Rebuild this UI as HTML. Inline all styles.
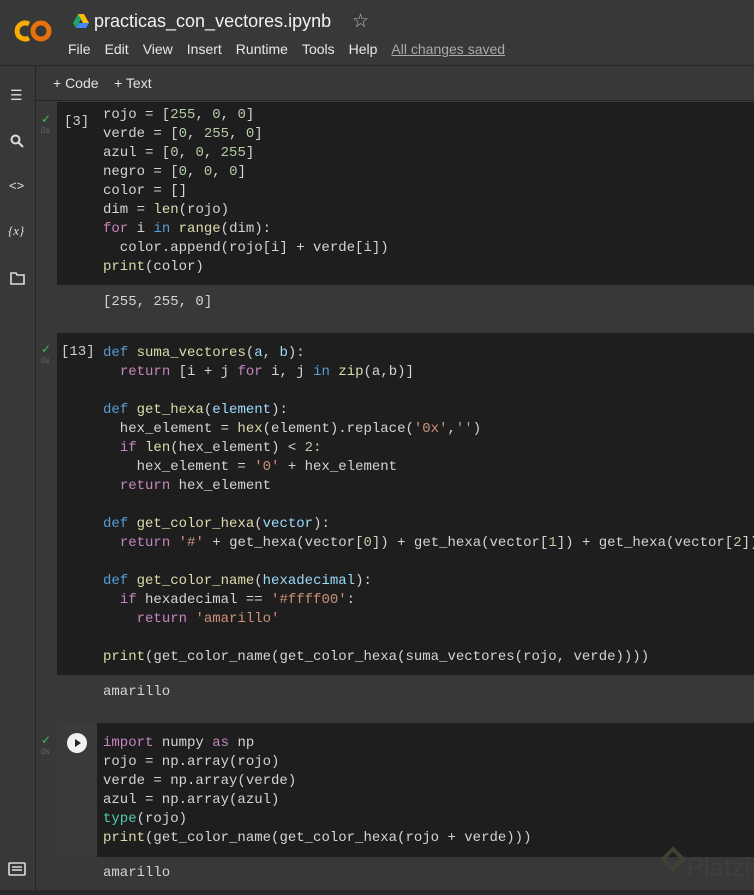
<!DOCTYPE html>
<html><head><meta charset="utf-8"><style>
*{margin:0;padding:0;box-sizing:border-box}
body{width:754px;height:895px;background:#383838;overflow:hidden;position:relative;font-family:"Liberation Sans",sans-serif;color:#e3e3e3}
.hdr{position:absolute;left:0;top:0;width:754px;height:66px;background:#383838;border-bottom:1px solid #262626}
.side{position:absolute;left:0;top:66px;width:36px;height:829px;background:#383838;border-right:1px solid #262626}
.tb{position:absolute;left:36px;top:66px;width:718px;height:35px;background:#383838;border-bottom:1px solid #262626}
.code{position:absolute;left:57px;width:697px;background:#1e1e1e}
.ln{position:absolute;left:103px;font-family:"Liberation Mono",monospace;font-size:14px;line-height:19px;white-space:pre;color:#d4d4d4}
.k{color:#c586c0}.d{color:#569cd6}.f{color:#dcdcaa}.p{color:#9cdcfe}.n{color:#b5cea8}.s{color:#ce9178}.t{color:#4ec9b0}
.lbl{position:absolute;font-family:"Liberation Mono",monospace;font-size:14px;color:#cfcfcf}
.chk{position:absolute;left:41px;color:#3fb950;font-size:12px}
.os{position:absolute;left:41px;color:#666;font-size:8px}
.menu span{margin-right:14px}
</style></head><body>
<div class="hdr">
<svg style="position:absolute;left:12px;top:18px" width="42" height="26" viewBox="0 0 42 26"><path d="M17 6 A8 8 0 1 0 17 20" stroke="#f9ab00" stroke-width="5" fill="none"/><circle cx="29" cy="13" r="8" stroke="#e8710a" stroke-width="5" fill="none"/></svg>
<svg style="position:absolute;left:73px;top:14px" width="16" height="14" viewBox="0 0 16 14"><path d="M5 0h6l5 9h-6z" fill="#fbbc04"/><path d="M5 0l-5 9 3 5 5-9z" fill="#1fa463"/><path d="M3 14h10l3-5H6z" fill="#4285f4"/></svg>
<div style="position:absolute;left:94px;top:11px;font-size:18px;color:#f1f1f1">practicas_con_vectores.ipynb</div>
<div style="position:absolute;left:352px;top:10px;font-size:19px;color:#bbb">☆</div>
<div class="menu" style="position:absolute;left:68px;top:41px;font-size:14px;color:#e8e8e8"><span>File</span><span>Edit</span><span>View</span><span>Insert</span><span>Runtime</span><span>Tools</span><span>Help</span><span style="color:#aaa;text-decoration:underline">All changes saved</span></div>
</div>
<div class="side">
<div style="position:absolute;left:10px;top:22px;width:14px;font-size:14px;color:#ddd;line-height:14px">☰</div>
<svg style="position:absolute;left:10px;top:68px" width="14" height="14" viewBox="0 0 14 14"><circle cx="5.5" cy="5.5" r="4" stroke="#ddd" stroke-width="2" fill="none"/><path d="M8.5 8.5l4.5 4.5" stroke="#ddd" stroke-width="2"/></svg>
<div style="position:absolute;left:9px;top:112px;font-size:13px;color:#ddd">&lt;&gt;</div>
<div style="position:absolute;left:8px;top:157px;font-size:13px;color:#ddd;font-family:'Liberation Serif',serif;font-style:italic">{x}</div>
<svg style="position:absolute;left:10px;top:206px" width="15" height="13" viewBox="0 0 15 13"><path d="M1 1h5l1 2h7v9H1z" stroke="#ddd" stroke-width="1.6" fill="none"/></svg>
<svg style="position:absolute;left:8px;top:796px" width="18" height="14" viewBox="0 0 18 14"><rect x="1" y="1" width="16" height="12" rx="1" stroke="#ddd" stroke-width="1.6" fill="none"/><path d="M4 5h10M4 8h10" stroke="#ddd" stroke-width="1.4"/></svg>
</div>
<div class="tb"><div style="position:absolute;left:17px;top:9px;font-size:14px;color:#e3e3e3">+ Code &nbsp;&nbsp; + Text</div></div>

<div class="code" style="top:102px;height:183px"></div>
<div class="chk" style="top:112px">✓</div><div class="os" style="top:126px">0s</div>
<div class="lbl" style="left:64px;top:114px">[3]</div>
<div class="ln" style="top:106px">rojo = [<span class="n">255</span>, <span class="n">0</span>, <span class="n">0</span>]
verde = [<span class="n">0</span>, <span class="n">255</span>, <span class="n">0</span>]
azul = [<span class="n">0</span>, <span class="n">0</span>, <span class="n">255</span>]
negro = [<span class="n">0</span>, <span class="n">0</span>, <span class="n">0</span>]
color = []
dim = <span class="f">len</span>(rojo)
<span class="k">for</span> i <span class="d">in</span> <span class="f">range</span>(dim):
  color.append(rojo[i] + verde[i])
<span class="f">print</span>(color)</div>
<div class="ln" style="top:293px">[255, 255, 0]</div>

<div class="code" style="top:333px;height:342px"></div>
<div class="chk" style="top:342px">✓</div><div class="os" style="top:356px">0s</div>
<div class="lbl" style="left:61px;top:344px">[13]</div>
<div class="ln" style="top:344px"><span class="d">def</span> <span class="f">suma_vectores</span>(<span class="p">a</span>, <span class="p">b</span>):
  <span class="k">return</span> [i + j <span class="k">for</span> i, j <span class="d">in</span> <span class="f">zip</span>(a,b)]

<span class="d">def</span> <span class="f">get_hexa</span>(<span class="p">element</span>):
  hex_element = <span class="f">hex</span>(element).replace(<span class="s">'0x'</span>,<span class="s">''</span>)
  <span class="k">if</span> <span class="f">len</span>(hex_element) &lt; <span class="n">2</span>:
    hex_element = <span class="s">'0'</span> + hex_element
  <span class="k">return</span> hex_element

<span class="d">def</span> <span class="f">get_color_hexa</span>(<span class="p">vector</span>):
  <span class="k">return</span> <span class="s">'#'</span> + get_hexa(vector[<span class="n">0</span>]) + get_hexa(vector[<span class="n">1</span>]) + get_hexa(vector[<span class="n">2</span>]))

<span class="d">def</span> <span class="f">get_color_name</span>(<span class="p">hexadecimal</span>):
  <span class="k">if</span> hexadecimal == <span class="s">'#ffff00'</span>:
    <span class="k">return</span> <span class="s">'amarillo'</span>

<span class="f">print</span>(get_color_name(get_color_hexa(suma_vectores(rojo, verde))))</div>
<div class="ln" style="top:683px">amarillo</div>

<div class="code" style="top:723px;height:134px"></div>
<div style="position:absolute;left:57px;top:723px;width:40px;height:134px;background:#3a3a3a"></div>
<div style="position:absolute;left:67px;top:733px;width:20px;height:20px;border-radius:50%;background:#f1f1f1"></div>
<svg style="position:absolute;left:67px;top:733px" width="20" height="20" viewBox="0 0 20 20"><path d="M8 6l6 4-6 4z" fill="#222"/></svg>
<div class="chk" style="top:733px">✓</div><div class="os" style="top:747px">0s</div>
<div class="ln" style="top:734px"><span class="k">import</span> numpy <span class="k">as</span> np
rojo = np.array(rojo)
verde = np.array(verde)
azul = np.array(azul)
<span class="t">type</span>(rojo)
<span class="f">print</span>(get_color_name(get_color_hexa(rojo + verde)))</div>
<div class="ln" style="top:864px">amarillo</div>
<div style="position:absolute;left:664px;top:850px;width:18px;height:18px;border:4px solid #3f4036;transform:rotate(45deg)"></div>
<div style="position:absolute;left:665px;top:852px;font-size:26px;color:#3e3e3e;padding-left:0;margin-left:0"><span style="margin-left:0">&nbsp;&nbsp;&nbsp;Platzi</span></div>
<div style="position:absolute;left:0;top:890px;width:754px;height:5px;background:#2a2a2a"></div>
</body></html>
